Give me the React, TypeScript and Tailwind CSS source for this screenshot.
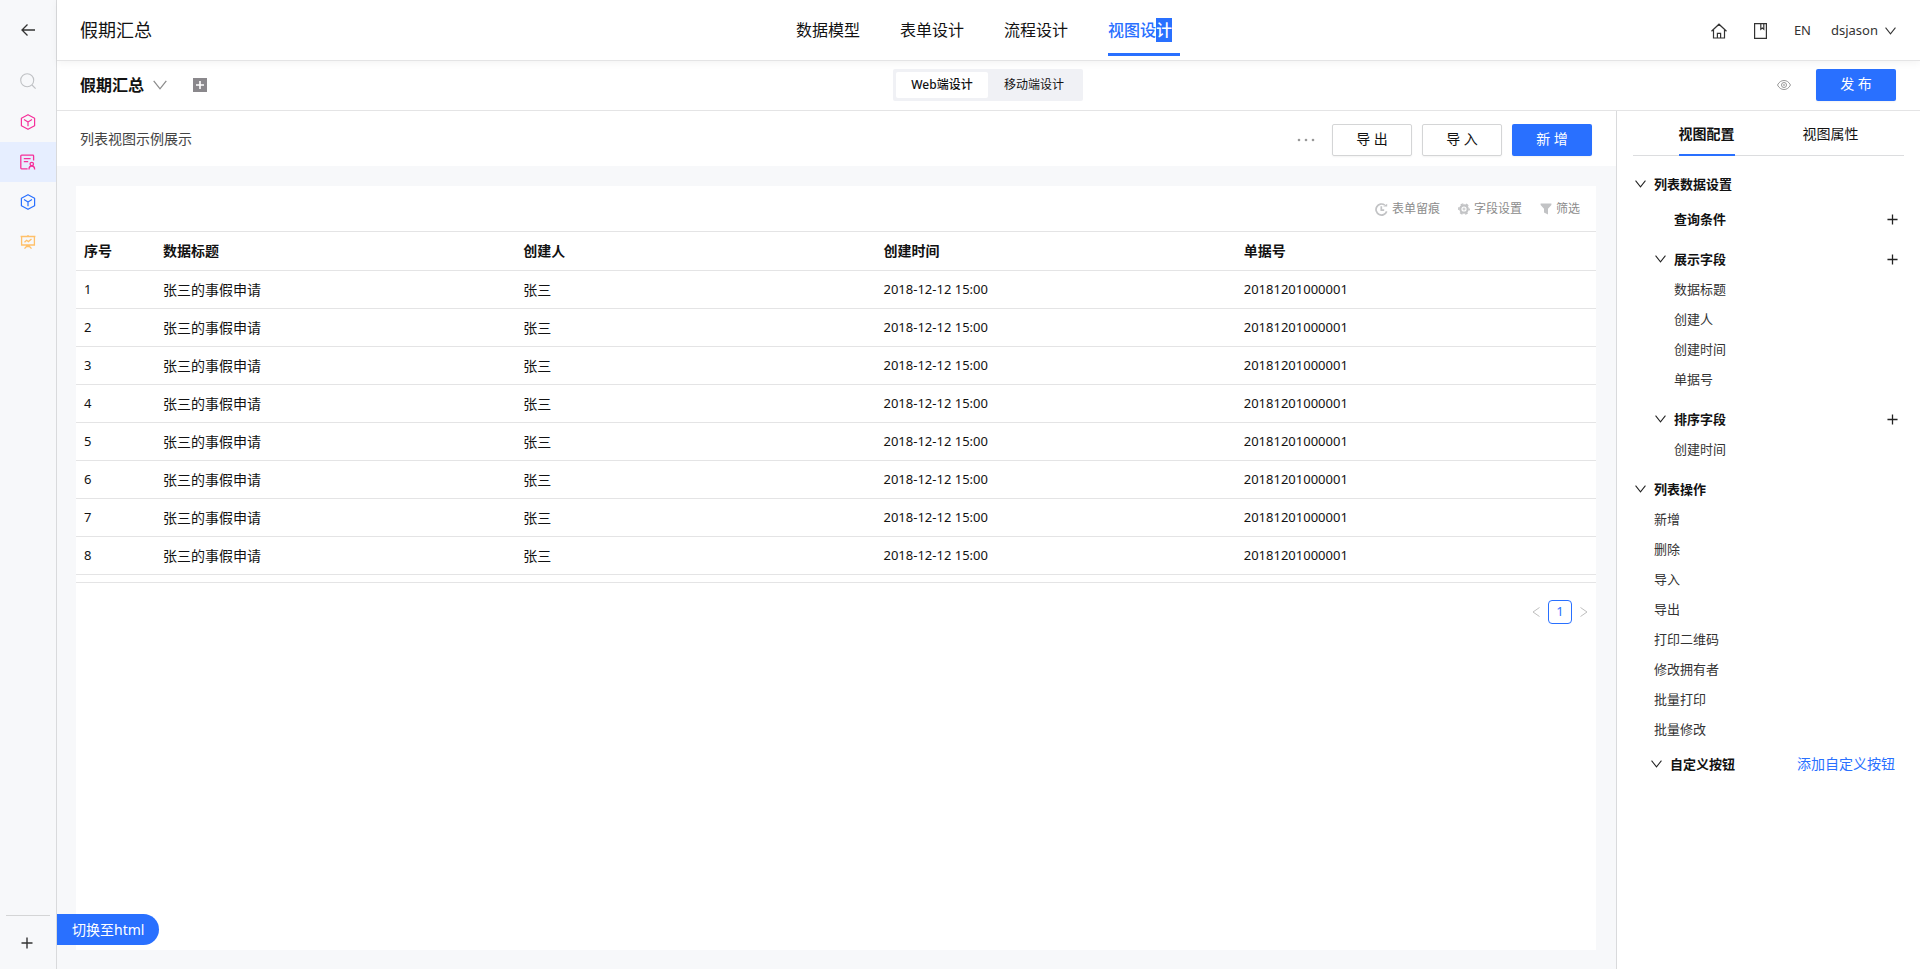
import { useState } from "react";
import type { ReactNode } from "react";

const navTabs = ["数据模型", "表单设计", "流程设计"];

const rows = Array.from({ length: 8 }, (_, i) => ({
  id: i + 1,
  title: "张三的事假申请",
  creator: "张三",
  time: "2018-12-12 15:00",
  code: "20181201000001",
}));

const actions = ["新增", "删除", "导入", "导出", "打印二维码", "修改拥有者", "批量打印", "批量修改"];

type IconProps = { className?: string };

const ChevronDown = ({ className = "w-[14px]" }: IconProps) => (
  <svg viewBox="0 0 14 10" className={className} fill="none" stroke="currentColor" strokeWidth="1.3">
    <path d="M0.7 0.8 7 8.8 13.3 0.8" />
  </svg>
);

const Plus = ({ className = "w-3" }: IconProps) => (
  <svg viewBox="0 0 12 12" className={className} fill="none" stroke="currentColor" strokeWidth="1.4">
    <path d="M6 0.5v11M0.5 6h11" />
  </svg>
);

const Cube = ({ className }: IconProps) => (
  <svg viewBox="0 0 16 16" className={className} fill="none" stroke="currentColor" strokeWidth="1.2" strokeLinejoin="round">
    <path d="M8 0.7 14.6 4.3v7.4L8 15.3 1.4 11.7V4.3z" />
    <path d="M4 5.6 8 7.9l4-2.3M8 7.9v4.3" />
  </svg>
);

const FormUser = ({ className }: IconProps) => (
  <svg viewBox="0 0 16 16" className={className} fill="none" stroke="currentColor" strokeWidth="1.3">
    <path d="M7.6 14.8H1.6a.8.8 0 0 1-.8-.8V2a.8.8 0 0 1 .8-.8h11.2a.8.8 0 0 1 .8.8v4.4" />
    <path d="M3.8 4.6h6.8M3.8 7.6h4.4" />
    <circle cx="11.8" cy="10" r="1.7" />
    <path d="M9 15.4c0-2 .9-3.4 2.8-3.4s2.8 1.4 2.8 3.4" />
  </svg>
);

const Board = ({ className }: IconProps) => (
  <svg viewBox="0 0 16 16" className={className} fill="none" stroke="currentColor" strokeWidth="1.3">
    <path d="M0.6 2.5h14.8M1.6 2.5v8.5h12.8V2.5M8 1v1.5M8 11v1.5M4.5 14.6 6.5 12.5h3l2 2.1" />
    <path d="M4.5 8.2 6.6 6.3 8.4 7.6 11.5 5" />
  </svg>
);

const PrimaryButton = ({ children }: { children: ReactNode }) => (
  <button className="h-8 w-20 rounded-xs bg-[#2970ff] pb-0.5 text-sm text-white shadow-xs">{children}</button>
);

const DefaultButton = ({ children }: { children: ReactNode }) => (
  <button className="h-8 w-20 rounded-xs border border-[#d4d5d6] bg-white pb-0.5 text-sm text-[#121212] shadow-xs">
    {children}
  </button>
);

const Sidebar = () => (
  <aside className="flex w-[57px] shrink-0 flex-col items-center border-r border-[#d9dadc] bg-[#f7f8fa]">
    <button aria-label="返回" className="flex h-[60px] w-full items-center justify-center text-[#333]">
      <svg viewBox="0 0 14 12" className="w-[14px]" fill="none" stroke="currentColor" strokeWidth="1.3">
        <path d="M14 6H1M6.5 0.5 1 6l5.5 5.5" />
      </svg>
    </button>
    <button aria-label="搜索" className="flex h-[42px] w-full items-center justify-center text-[#bfc1c4]">
      <svg viewBox="0 0 16 16" className="w-4" fill="none" stroke="currentColor" strokeWidth="1.1">
        <circle cx="7.2" cy="7.2" r="6.5" />
        <path d="M12 12l3.6 3.6" />
      </svg>
    </button>
    <button aria-label="模型" className="flex h-10 w-full items-center justify-center text-[#f5309a]">
      <Cube className="w-4" />
    </button>
    <button aria-label="表单" className="flex h-10 w-full items-center justify-center bg-[#e6eeff] text-[#f5309a]">
      <FormUser className="w-4" />
    </button>
    <button aria-label="应用" className="flex h-10 w-full items-center justify-center text-[#2970ff]">
      <Cube className="w-4" />
    </button>
    <button aria-label="报表" className="flex h-10 w-full items-center justify-center text-[#ffc069]">
      <Board className="w-4" />
    </button>
    <div className="mt-auto w-11 border-t border-[#d4d5d6]" />
    <button aria-label="添加" className="flex h-[53px] w-full items-center justify-center pr-0.5 text-[#333]">
      <Plus />
    </button>
  </aside>
);

const Header = () => (
  <header className="z-10 flex h-[61px] items-center border-b border-[#e4e4e5] bg-white pr-6 pl-[23px] shadow-[0_2px_8px_rgba(0,0,0,0.05)]">
    <h1 className="flex-1 text-lg">假期汇总</h1>
    <nav className="flex h-full gap-8 text-base">
      {navTabs.map((tab) => (
        <a key={tab} href="#" className="mt-[18px] w-[72px] leading-6">
          {tab}
        </a>
      ))}
      <a href="#" className="mt-[18px] mb-1 w-[72px] border-b-3 border-[#2970ff] leading-6 font-medium text-[#2970ff]">
        视图设<span className="inline-block bg-[#2970ff] text-white">计</span>
      </a>
    </nav>
    <div className="flex flex-1 items-center justify-end pt-0.5 text-[13px] text-[#333]">
      <button aria-label="首页" className="mr-[27px]">
        <svg viewBox="0 0 16 16" className="w-4" fill="none" stroke="currentColor" strokeWidth="1.2">
          <path d="M0.5 8.3 8 1.2l7.5 7.1M2.5 7v8h11V7M6.4 15v-4.6h3.2V15" />
        </svg>
      </button>
      <button aria-label="文档" className="mr-[27px]">
        <svg viewBox="0 0 13 16" className="w-[13px]" fill="none" stroke="currentColor" strokeWidth="1.2">
          <path d="M0.6 0.6h11.8v14.8H0.6zM6.8 0.6v5.6l1.5-1.2 1.5 1.2V0.6" />
        </svg>
      </button>
      <button className="mr-5">EN</button>
      <button className="flex items-center gap-[7px]">
        dsjason
        <ChevronDown className="w-[11px]" />
      </button>
    </div>
  </header>
);

const SubHeader = () => {
  const [device, setDevice] = useState("web");
  return (
    <div className="flex h-[50px] items-center border-b border-[#e4e4e5] pr-6 pb-px pl-[23px]">
      <div className="flex flex-1 items-center">
        <h2 className="text-base font-bold">假期汇总</h2>
        <button aria-label="切换视图" className="ml-[9px] text-[#8c8c8c]">
          <ChevronDown />
        </button>
        <button aria-label="新建视图" className="ml-[26px] flex h-[14px] w-[14px] items-center justify-center bg-[#8a888c] text-white">
          <svg viewBox="0 0 8 8" className="w-2" stroke="currentColor" strokeWidth="1.6">
            <path d="M4 0v8M0 4h8" />
          </svg>
        </button>
      </div>
      <div className="flex rounded-xs bg-[#f0f1f5] p-[3px] text-xs">
        <button
          onClick={() => setDevice("web")}
          className={device === "web" ? "h-[26px] w-[92px] rounded-xs bg-white font-medium" : "h-[26px] w-[92px]"}
        >
          Web端设计
        </button>
        <button
          onClick={() => setDevice("mobile")}
          className={device === "mobile" ? "h-[26px] w-[92px] rounded-xs bg-white font-medium" : "h-[26px] w-[92px]"}
        >
          移动端设计
        </button>
      </div>
      <div className="flex flex-1 items-center justify-end gap-[25px]">
        <button aria-label="预览" className="text-[#999]">
          <svg viewBox="0 0 14 10" className="w-[14px]" fill="none" stroke="currentColor">
            <path d="M0.5 5C2 2 4.3 0.5 7 0.5S12 2 13.5 5C12 8 9.7 9.5 7 9.5S2 8 0.5 5z" />
            <circle cx="7" cy="5" r="2.5" />
            <circle cx="7" cy="5" r="0.5" />
          </svg>
        </button>
        <PrimaryButton>发 布</PrimaryButton>
      </div>
    </div>
  );
};

const TableTools = () => (
  <div className="flex h-[45px] items-center justify-end gap-[18px] pt-px pr-4 text-xs text-[#8c8c8c]">
    <button className="flex items-center gap-1">
      <svg viewBox="0 0 13 13" className="w-[13px] text-[#c2c3c5]" fill="none" stroke="currentColor" strokeWidth="1.7">
        <path d="M11.7 8.4A5.5 5.500 0 1 1 9.800 2.100M6.300 3.200v3.900h2.900" />
        <path d="M8.200 3.600h4V0.800z" fill="currentColor" stroke="none" />
      </svg>
      表单留痕
    </button>
    <button className="flex items-center gap-1">
      <svg viewBox="0 0 12 12" className="w-3 text-[#c2c3c5]" fill="none" stroke="currentColor">
        <circle cx="6" cy="6" r="5.2" strokeWidth="1.4" strokeDasharray="2.723 2.723" strokeDashoffset="1.36" />
        <circle cx="6" cy="6" r="3.7" strokeWidth="2.2" />
        <circle cx="6" cy="6" r="1" />
      </svg>
      字段设置
    </button>
    <button className="flex items-center gap-1">
      <svg viewBox="0 0 12 12" className="w-3 text-[#c2c3c5]" fill="currentColor">
        <path d="M0.6 0.5h10.8v1.400L8 5.800v5.700L4 9.600V5.800L0.600 1.900z" />
      </svg>
      筛选
    </button>
  </div>
);

const DataTable = () => (
  <table className="w-full table-fixed border-collapse text-left text-sm">
    <thead>
      <tr className="h-[39px] border-y border-[#e4e4e5]">
        <th className="w-[79px] px-2 font-bold">序号</th>
        <th className="px-2 font-bold">数据标题</th>
        <th className="px-2 font-bold">创建人</th>
        <th className="px-2 font-bold">创建时间</th>
        <th className="px-2 font-bold">单据号</th>
      </tr>
    </thead>
    <tbody>
      {rows.map((row) => (
        <tr key={row.id} className="h-[38px] border-b border-[#e4e4e5]">
          <td className="px-2 text-[13px]">{row.id}</td>
          <td className="px-2">{row.title}</td>
          <td className="px-2">{row.creator}</td>
          <td className="px-2 text-[13px]">{row.time}</td>
          <td className="px-2 text-[13px]">{row.code}</td>
        </tr>
      ))}
    </tbody>
  </table>
);

const Pagination = () => (
  <div className="mt-[7px] flex items-center justify-end border-t border-[#e4e4e5] pt-[17px] pr-2 text-[#bfbfbf]">
    <button aria-label="上一页">
      <svg viewBox="0 0 8 10" className="w-2" fill="none" stroke="currentColor">
        <path d="M7.5 0.5 1 5l6.5 4.5" />
      </svg>
    </button>
    <button className="mx-2 h-6 w-6 rounded-sm border border-[#2970ff] text-[13px] text-[#2970ff]">1</button>
    <button aria-label="下一页">
      <svg viewBox="0 0 8 10" className="w-2" fill="none" stroke="currentColor">
        <path d="M0.5 0.5 7 5 0.5 9.5" />
      </svg>
    </button>
  </div>
);

const Group = ({ title, className, add }: { title: string; className: string; add?: boolean }) => (
  <div className={className}>
    <button className="flex items-center gap-2 font-bold">
      <ChevronDown className="w-[11px] text-[#222]" />
      {title}
    </button>
    {add && (
      <button aria-label={"添加" + title} className="ml-auto text-[#222]">
        <Plus className="w-[11px]" />
      </button>
    )}
  </div>
);

const ConfigPanel = () => (
  <aside className="w-[304px] shrink-0 border-l border-[#d9dadc] bg-white">
    <div className="mx-4 flex h-[45px] justify-center gap-[68px] border-b border-[#dcdddf] text-sm">
      <button className="-mb-px border-b-2 border-[#2970ff] pt-0.5 font-bold">视图配置</button>
      <button className="pt-0.5">视图属性</button>
    </div>
    <div className="pt-[13px] pr-[22px] pl-[18px] text-[13px] leading-[30px]">
      <Group title="列表数据设置" className="flex items-center" />
      <div className="mt-[5px] flex items-center pl-[39px] font-bold">
        查询条件
        <button aria-label="添加查询条件" className="ml-auto text-[#222]">
          <Plus className="w-[11px]" />
        </button>
      </div>
      <Group title="展示字段" className="mt-[10px] flex items-center pl-5" add />
      <ul className="pl-[39px] text-[#333]">
        <li>数据标题</li>
        <li>创建人</li>
        <li>创建时间</li>
        <li>单据号</li>
      </ul>
      <Group title="排序字段" className="mt-[10px] flex items-center pl-5" add />
      <ul className="pl-[39px] text-[#333]">
        <li>创建时间</li>
      </ul>
      <Group title="列表操作" className="mt-[10px] flex items-center" />
      <ul className="pl-[19px] text-[#333]">
        {actions.map((action) => (
          <li key={action}>{action}</li>
        ))}
      </ul>
      <div className="mt-[5px] flex items-center justify-between">
        <Group title="自定义按钮" className="flex items-center pl-4" />
        <a href="#" className="mr-[3px] text-sm leading-[30px] text-[#2970ff]">
          添加自定义按钮
        </a>
      </div>
    </div>
  </aside>
);

export default function App() {
  return (
    <div className="relative flex min-h-screen bg-white font-['Noto_Sans','Noto_Sans_CJK_SC',sans-serif] text-[#121212]">
      <Sidebar />
      <div className="flex min-w-0 flex-1 flex-col">
        <Header />
        <SubHeader />
        <div className="flex flex-1">
          <main className="flex min-w-0 flex-1 flex-col bg-[#f7f8fa]">
            <div className="flex h-[55px] items-center gap-[10px] bg-white pt-0.5 pr-6 pl-[23px]">
              <p className="flex-1 pb-0.5 text-sm text-[#444]">列表视图示例展示</p>
              <button aria-label="更多" className="mr-[7px] text-[#999]">
                <svg viewBox="0 0 18 4" className="w-[18px]" fill="currentColor">
                  <circle cx="2" cy="2" r="1.3" />
                  <circle cx="9" cy="2" r="1.3" />
                  <circle cx="16" cy="2" r="1.3" />
                </svg>
              </button>
              <DefaultButton>导 出</DefaultButton>
              <DefaultButton>导 入</DefaultButton>
              <PrimaryButton>新 增</PrimaryButton>
            </div>
            <section className="mt-5 mr-5 mb-[19px] ml-[19px] flex-1 bg-white">
              <TableTools />
              <DataTable />
              <Pagination />
            </section>
          </main>
          <ConfigPanel />
        </div>
      </div>
      <button className="absolute bottom-6 left-[57px] h-[31px] rounded-r-full bg-[#2970ff] px-[15px] text-sm text-white">
        切换至html
      </button>
    </div>
  );
}
